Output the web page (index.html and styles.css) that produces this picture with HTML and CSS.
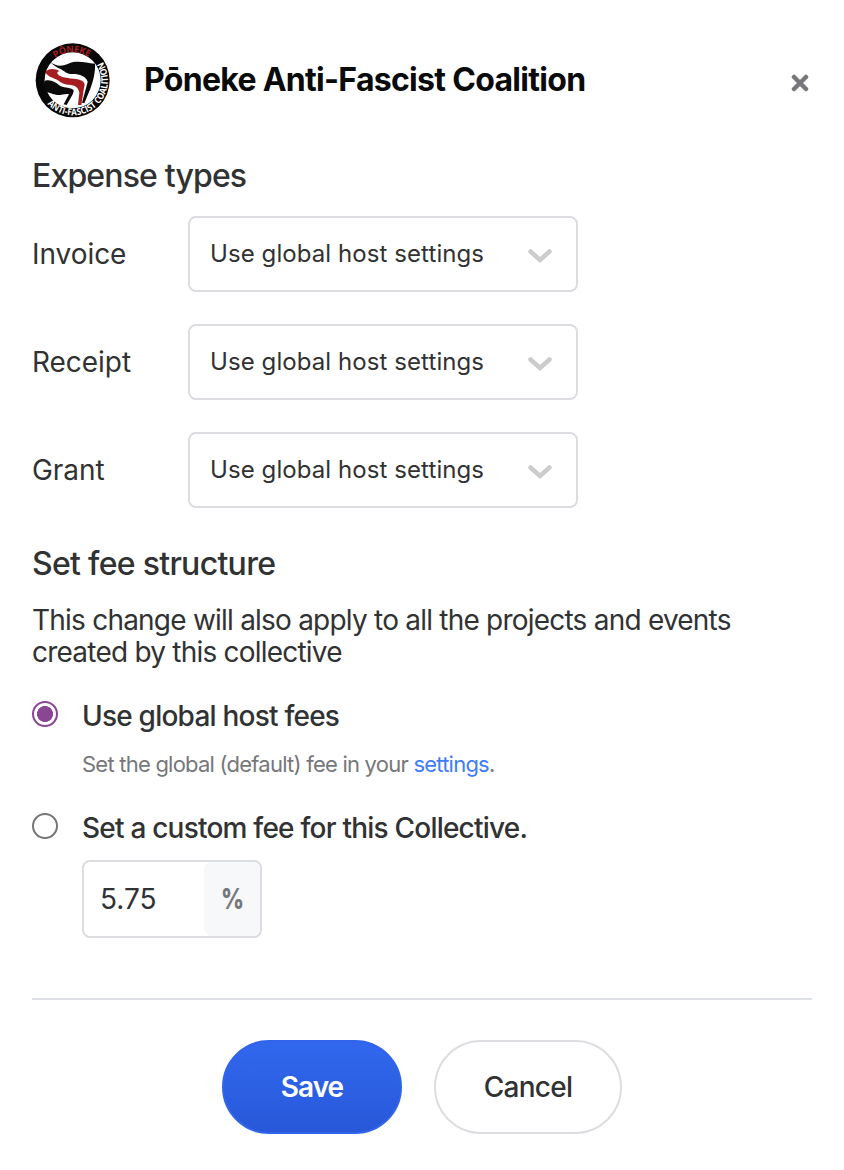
FILE: index.html
```html
<!DOCTYPE html>
<html lang="en">
<head>
<meta charset="utf-8">
<title>Collective settings</title>
<link rel="stylesheet" href="styles.css">
</head>
<body>
<main class="modal">
  <header class="header">
    <svg class="logo" viewBox="24 24 240 240" aria-hidden="true">
      <defs>
        <path id="arc-top" d="M62 145a84 84 0 0 1 168 0"/>
        <path id="arc-bottom" d="M42 145a105 105 0 1 0 210 0a105 105 0 0 0 -34 -77"/>
      </defs>
      <circle cx="146" cy="145" r="111" fill="#070707"/>
      <circle cx="146" cy="145" r="84" fill="#fff"/>
      <path d="M80 91C98 105 117 103 136 94C160 84 186 93 213 95C215 118 207 150 199 170L181 214L174 212L191 150C188 132 162 125 145 126C130 127 120 116 108 110C97 106 87 99 80 91Z" fill="#0b0b0b"/>
      <path d="M64 120C73 108 91 108 108 118C97 118 98 126 107 131C127 142 153 136 174 146C182 151 184 157 180 167L172 219L162 219L166 182C164 167 153 159 135 158C118 159 109 149 96 142C84 136 70 134 64 120Z" fill="#a61d21"/>
      <path d="M63 146C82 142 93 150 106 160C118 169 134 165 148 173C151 178 146 188 140 198L128 219L119 217L135 187C123 183 115 190 99 189C84 187 77 181 66 181C61 170 60 156 63 146Z" fill="#0b0b0b"/>
      <text class="logo-text logo-red"><textPath href="#arc-top" startOffset="49%" text-anchor="middle" textLength="106">PŌNEKE</textPath></text>
      <text class="logo-text logo-white"><textPath href="#arc-bottom" startOffset="78" textLength="310" lengthAdjust="spacingAndGlyphs">ANTI-FASCIST COALITION</textPath></text>
    </svg>
    <h1 class="title">Pōneke Anti-Fascist Coalition</h1>
    <button class="close" aria-label="Close">
      <svg viewBox="0 0 18 18"><path d="M3 3l12 12M15 3L3 15"/></svg>
    </button>
  </header>

  <section class="expenses">
    <h2 class="heading">Expense types</h2>
    <div class="row"><span class="label">Invoice</span><div class="select"><span>Use global host settings</span><svg class="chevron" viewBox="0 0 24 14"><path d="M2.500 2.500L12 11l9.500-8.500"/></svg></div></div>
    <div class="row"><span class="label">Receipt</span><div class="select"><span>Use global host settings</span><svg class="chevron" viewBox="0 0 24 14"><path d="M2.500 2.500L12 11l9.500-8.500"/></svg></div></div>
    <div class="row"><span class="label">Grant</span><div class="select"><span>Use global host settings</span><svg class="chevron" viewBox="0 0 24 14"><path d="M2.500 2.500L12 11l9.500-8.500"/></svg></div></div>
  </section>

  <section class="fees">
    <h2 class="heading fee-heading">Set fee structure</h2>
    <p class="note">This change will also apply to all the projects and events<br>created by this collective</p>
    <div class="option">
      <span class="radio radio-on"></span>
      <div class="option-body">
        <div class="option-title">Use global host fees</div>
        <p class="hint">Set the global (default) fee in your <a class="link">settings</a>.</p>
      </div>
    </div>
    <div class="option option-custom">
      <span class="radio"></span>
      <div class="option-body">
        <div class="option-title">Set a custom fee for this Collective.</div>
        <div class="fee-input"><span class="fee-value">5.75</span><span class="percent"><span class="percent-sign">%</span></span></div>
      </div>
    </div>
  </section>

  <footer class="footer">
    <button class="button save"><span>Save</span></button>
    <button class="button cancel"><span>Cancel</span></button>
  </footer>
</main>
</body>
</html>
```
FILE: styles.css
```css
* { box-sizing: border-box; }
body { margin: 0; background: #fff; font-family: Inter, "Liberation Sans", sans-serif; color: #313233; }
h1, h2, p { margin: 0; }
button { font: inherit; padding: 0; cursor: pointer; }
.modal { height: 1170px; padding: 40px 32px 0; white-space: nowrap; }
.header { display: flex; align-items: center; height: 80px; }
.logo { width: 80px; height: 80px; flex: none; }
.logo-text { font: 700 28px "Open Sans", sans-serif; }
.logo-red { fill: #a61d21; }
.logo-white { fill: #fff; }
.title { margin-left: 32px; font-size: 32px; line-height: 40px; font-weight: 700; letter-spacing: -0.7px; color: #090a0a; }
.close { margin: 6px 3px 0 auto; width: 18px; height: 18px; border: 0; background: none; display: flex; }
.close svg { width: 18px; height: 18px; fill: none; stroke: #76777a; stroke-width: 4.5; stroke-linecap: round; }
.heading { font-size: 32px; line-height: 40px; font-weight: 500; letter-spacing: -0.85px; }
.fee-heading { letter-spacing: -0.7px; }
.expenses { padding-top: 36px; display: flex; flex-direction: column; }
.row { display: flex; align-items: center; height: 76px; margin-bottom: 32px; }
.expenses .heading { margin-bottom: 20px; }
.label { width: 156px; font-size: 28px; line-height: 36px; letter-spacing: -0.05px; }
.select { width: 390px; height: 76px; border: 2px solid #dcdde0; border-radius: 8px; padding: 0 24px 2px 20px; display: flex; align-items: center; justify-content: space-between; font-size: 24px; letter-spacing: 0.08px; }
.chevron { width: 24px; height: 14px; margin-top: 5px; fill: none; stroke: #ccc; stroke-width: 4.5; stroke-linecap: round; }
.fees { padding-top: 4px; }
.note { margin-top: 20px; font-size: 28px; line-height: 32px; letter-spacing: -0.78px; }
.option { display: flex; margin-top: 30px; height: 82px; }
.option-custom { height: 128px; }
.radio { width: 26px; height: 26px; flex: none; margin: 3px 24px 0 0; border: 2px solid #767676; border-radius: 50%; }
.radio-on { border-color: #8b4595; background: radial-gradient(circle, #8b4595 7.7px, #fff 8.3px); }
.option-title { font-size: 28px; line-height: 36px; font-weight: 500; letter-spacing: -0.78px; }
.hint { margin-top: 14px; font-size: 22px; line-height: 32px; letter-spacing: -0.77px; color: #76777a; }
.link { color: #3f7df6; }
.fee-input { width: 180px; height: 78px; margin-top: 14px; display: flex; border: 2px solid #dcdde0; border-radius: 8px; }
.fee-value { width: 120px; padding-left: 16px; font-size: 28px; line-height: 74px; }
.percent { flex: 1; background: #f7f8fa; border-radius: 8px; color: #76777a; font-size: 28px; line-height: 74px; font-weight: 800; text-align: center; }
.percent-sign { display: inline-block; transform: scaleX(0.8); }
.footer { display: flex; justify-content: center; gap: 32px; margin-top: 60px; padding-top: 40px; border-top: 2px solid #dee1e5; }
.button { height: 94px; border-radius: 47px; font-size: 28px; font-weight: 500; letter-spacing: -0.75px; }
.save { width: 180px; border: 2px solid #3164e9; background: linear-gradient(#3168ee, #2858d9); color: #fff; font-weight: 600; letter-spacing: -1px; }
.cancel { width: 188px; border: 2px solid #dcdde0; background: #fff; color: #313233; }
```
